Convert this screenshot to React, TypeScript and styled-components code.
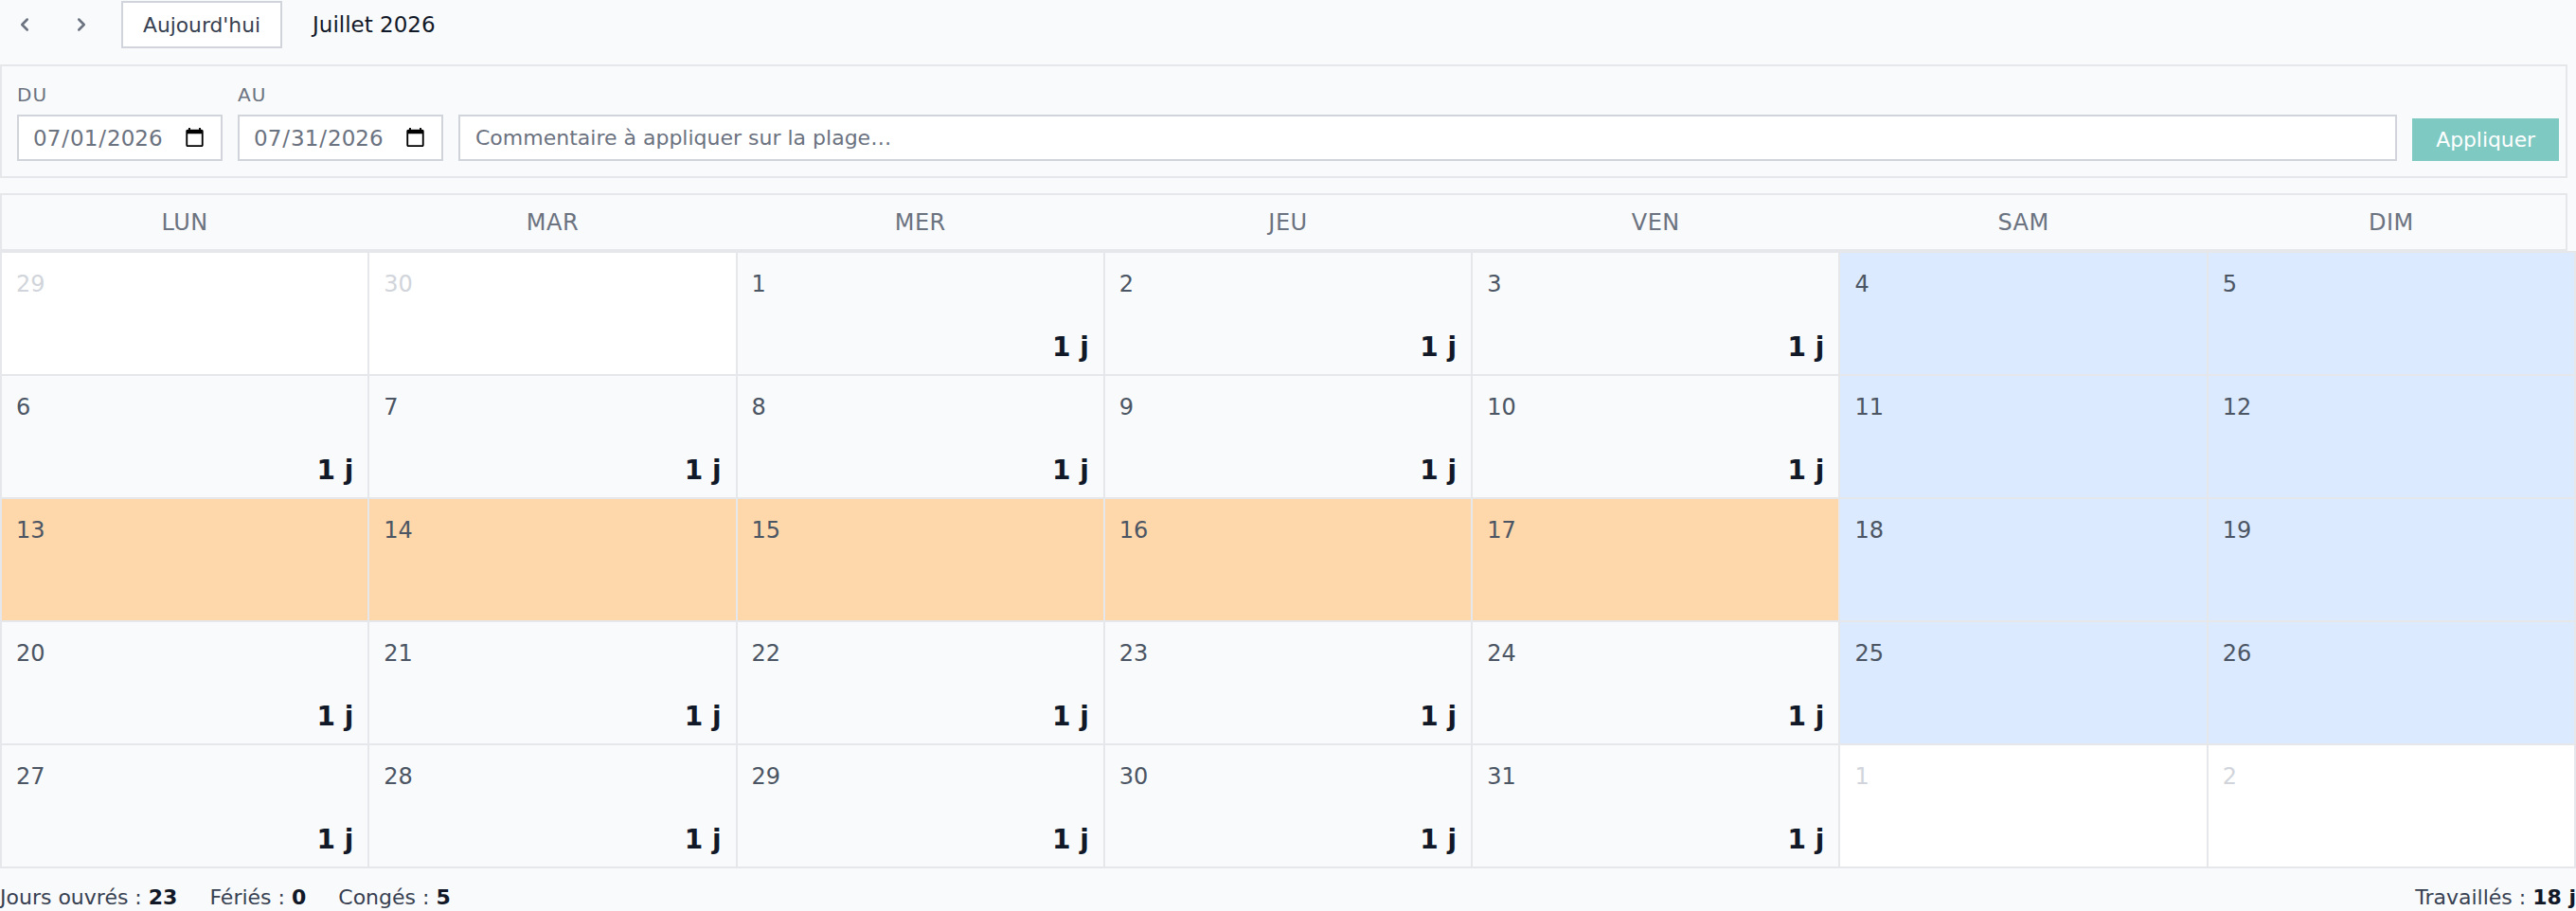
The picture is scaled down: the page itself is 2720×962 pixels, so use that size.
import React from 'react';
import styled, { createGlobalStyle } from 'styled-components';
import { ChevronLeft, ChevronRight } from 'lucide-react';

const GlobalStyle = createGlobalStyle`
  html, body { margin: 0; padding: 0; background: #f9fafb; overflow: hidden; }
  body { font-family: "DejaVu Sans", "Noto Sans", sans-serif; color: #111827; }
  *, *::before, *::after { box-sizing: border-box; }
`;

const Page = styled.div`
  display: flex;
  flex-direction: column;
  width: 100%;
`;

const TopBar = styled.div`
  display: flex;
  align-items: center;
  height: 52px;
  padding-left: 6px;
  margin-bottom: 16px;
`;

const NavButton = styled.button<{ $gap: number }>`
  width: 40px;
  height: 40px;
  display: flex;
  align-items: center;
  justify-content: center;
  background: none;
  border: none;
  padding: 0;
  color: #6b7280;
  margin-right: ${(p) => p.$gap}px;
  cursor: pointer;
`;

const TodayButton = styled.button`
  height: 50px;
  padding: 0 21px;
  border: 2px solid #d1d5db;
  background: #ffffff;
  color: #374151;
  font-family: "DejaVu Sans", sans-serif;
  font-size: 21.8px;
  cursor: pointer;
`;

const Title = styled.div`
  margin-left: 32px;
  font-size: 23px;
  color: #111827;
`;

const Panel = styled.div`
  margin-right: 9px;
  border: 2px solid #e5e7eb;
  background: #f9fafb;
  padding: 19px 16px 16px 16px;
`;

const FilterRow = styled.div`
  display: flex;
  align-items: flex-end;
  gap: 16px;
  margin-right: -9px;
`;

const Field = styled.div`
  display: flex;
  flex-direction: column;
`;

const Label = styled.label`
  font-size: 20px;
  line-height: 22px;
  letter-spacing: 1px;
  text-transform: uppercase;
  color: #6b7280;
  margin-bottom: 10px;
`;

const DateInput = styled.input`
  width: 217px;
  height: 49px;
  padding: 0 14px;
  border: 2px solid #d1d5db;
  background: #ffffff;
  color: #6b7280;
  font-family: "DejaVu Sans", sans-serif;
  font-size: 23px;
  outline: none;
`;

const CommentInput = styled.input`
  flex: 1;
  min-width: 0;
  height: 49px;
  padding: 0 16px;
  border: 2px solid #d1d5db;
  background: #ffffff;
  color: #374151;
  font-family: "DejaVu Sans", sans-serif;
  font-size: 22px;
  outline: none;
  &::placeholder { color: #6b7280; }
`;

const ApplyButton = styled.button`
  height: 45px;
  padding: 0 25px;
  border: none;
  background: #7ec9c2;
  color: #ffffff;
  font-family: "DejaVu Sans", sans-serif;
  font-size: 21.8px;
`;

const HeaderBox = styled.div`
  margin-top: 16px;
  margin-right: 9px;
  border: 2px solid #e5e7eb;
  background: #f9fafb;
`;

const HeaderGrid = styled.div`
  display: grid;
  grid-template-columns: repeat(7, 1fr);
  column-gap: 2px;
  margin-right: -9px;
`;

const HeaderCell = styled.div`
  height: 57px;
  display: flex;
  align-items: center;
  justify-content: center;
  font-size: 24px;
  letter-spacing: 0.5px;
  color: #6b7280;
`;

const Grid = styled.div`
  display: grid;
  grid-template-columns: repeat(7, 1fr);
  gap: 2px;
  background: #e5e7eb;
  border: 2px solid #e5e7eb;
`;

type Kind = 'out' | 'weekend' | 'leave' | 'work';

const cellBg: Record<Kind, string> = {
  out: '#ffffff',
  weekend: '#dbeafe',
  leave: '#fed7aa',
  work: '#f9fafb',
};

const Cell = styled.div<{ $kind: Kind }>`
  height: 128px;
  padding: 15px 15px 14px 15px;
  display: flex;
  flex-direction: column;
  justify-content: space-between;
  background: ${(p) => cellBg[p.$kind]};
`;

const DayNum = styled.div<{ $muted: boolean }>`
  font-size: 24px;
  line-height: 36px;
  color: ${(p) => (p.$muted ? '#d1d5db' : '#4b5563')};
`;

const DayValue = styled.div`
  align-self: flex-end;
  font-size: 28px;
  line-height: 28px;
  font-weight: 700;
  color: #111827;
`;

const Footer = styled.div`
  display: flex;
  justify-content: space-between;
  margin-top: 15px;
  font-size: 22px;
  line-height: 32px;
  color: #374151;
`;

const Stats = styled.div`
  display: flex;
  gap: 34px;
`;

const Strong = styled.b`
  font-weight: 700;
  color: #111827;
`;

const DAYS = ['LUN', 'MAR', 'MER', 'JEU', 'VEN', 'SAM', 'DIM'];

type Day = { n: number; kind: Kind };

function buildDays(): Day[] {
  const days: Day[] = [];
  days.push({ n: 29, kind: 'out' }, { n: 30, kind: 'out' });
  for (let d = 1; d <= 31; d++) {
    const col = (d + 1) % 7; // July 1 is Wednesday (col 2)
    let kind: Kind = 'work';
    if (col === 5 || col === 6) kind = 'weekend';
    else if (d >= 13 && d <= 17) kind = 'leave';
    days.push({ n: d, kind });
  }
  days.push({ n: 1, kind: 'out' }, { n: 2, kind: 'out' });
  return days;
}

export default function App() {
  const days = buildDays();
  return (
    <Page>
      <GlobalStyle />
      <TopBar>
        <NavButton $gap={20} aria-label="Mois précédent">
          <ChevronLeft size={22} strokeWidth={2.75} />
        </NavButton>
        <NavButton $gap={22} aria-label="Mois suivant">
          <ChevronRight size={22} strokeWidth={2.75} />
        </NavButton>
        <TodayButton>Aujourd'hui</TodayButton>
        <Title>Juillet 2026</Title>
      </TopBar>

      <Panel>
        <FilterRow>
          <Field>
            <Label>Du</Label>
            <DateInput type="date" defaultValue="2026-07-01" />
          </Field>
          <Field>
            <Label>Au</Label>
            <DateInput type="date" defaultValue="2026-07-31" />
          </Field>
          <CommentInput placeholder="Commentaire à appliquer sur la plage…" />
          <ApplyButton>Appliquer</ApplyButton>
        </FilterRow>
      </Panel>

      <HeaderBox>
        <HeaderGrid>
          {DAYS.map((d) => (
            <HeaderCell key={d}>{d}</HeaderCell>
          ))}
        </HeaderGrid>
      </HeaderBox>

      <Grid>
        {days.map((d, i) => (
          <Cell key={i} $kind={d.kind}>
            <DayNum $muted={d.kind === 'out'}>{d.n}</DayNum>
            {d.kind === 'work' && <DayValue>1 j</DayValue>}
          </Cell>
        ))}
      </Grid>

      <Footer>
        <Stats>
          <span>Jours ouvrés : <Strong>23</Strong></span>
          <span>Fériés : <Strong>0</Strong></span>
          <span>Congés : <Strong>5</Strong></span>
        </Stats>
        <span>Travaillés : <Strong>18 j</Strong></span>
      </Footer>
    </Page>
  );
}
